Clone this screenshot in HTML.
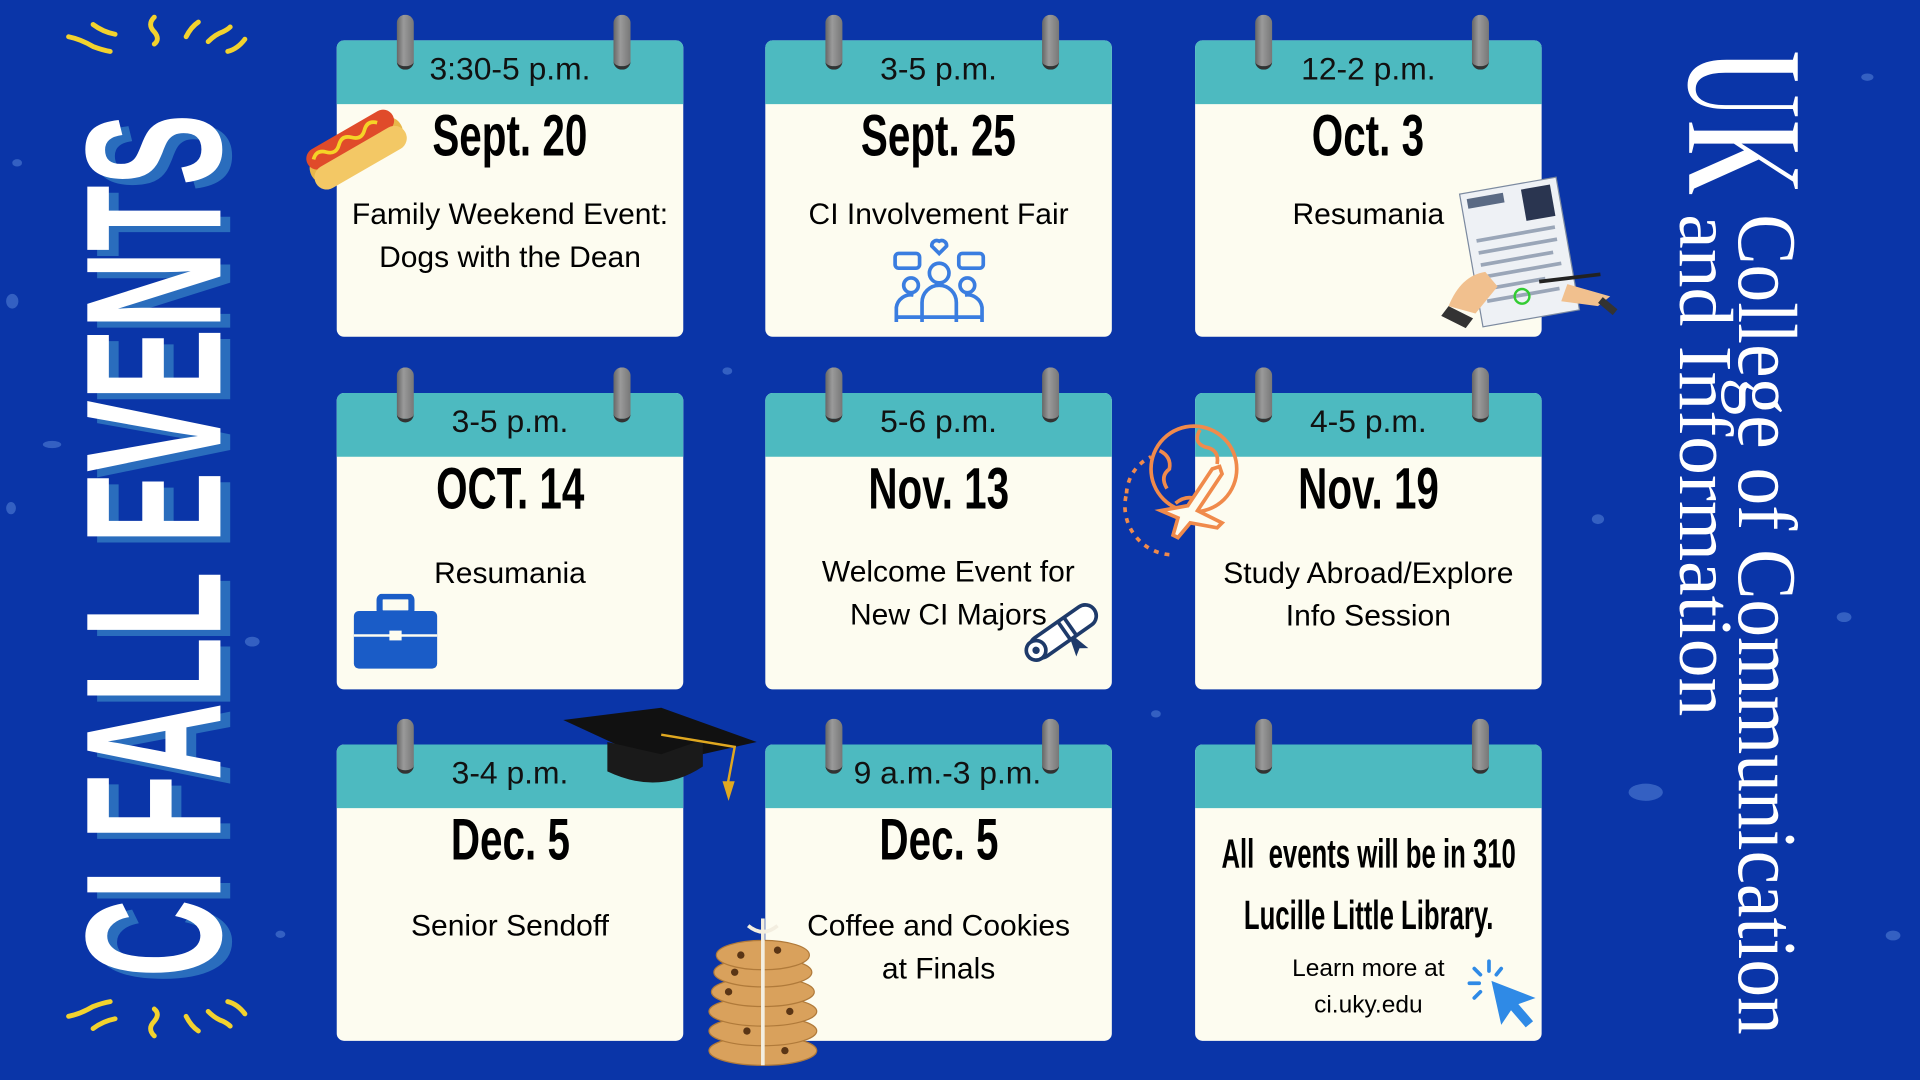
<!DOCTYPE html>
<html><head><meta charset="utf-8"><style>
html,body{margin:0;padding:0;width:1920px;height:1080px;overflow:hidden;background:#0a35a8}
#w{position:absolute;left:0;top:0;width:1568px;height:882px;transform:scale(1.22449);transform-origin:0 0;background:#0a35a8;font-family:"Liberation Sans",sans-serif}
.c{position:absolute;width:283px;height:242px;background:#fdfcf0;border-radius:6px;overflow:visible}
.h{position:absolute;left:0;top:0;width:100%;height:52px;background:#4dbac0;border-radius:6px 6px 0 0;text-align:center;font-size:26px;line-height:46px;color:#111}
.r{position:absolute;top:-21px;width:14px;height:42px;border-radius:7px;background:linear-gradient(90deg,#666,#9a9a9a 40%,#777);border-bottom:3px solid #333}
.r1{left:49px}.r2{left:226px}
.d{position:absolute;left:-200px;width:683px;top:56px;text-align:center;white-space:nowrap;color:#000}
.d span{display:inline-block;font-weight:bold;font-size:44px;line-height:46px;transform:scale(.75,1.08)}
.t{position:absolute;left:0;width:100%;text-align:center;font-size:24.5px;line-height:35px;color:#000;white-space:nowrap}
.dot{position:absolute;background:#3f6cc8;border-radius:50%;opacity:.8}
</style></head><body><div id="w">
<div class="dot" style="left:10px;top:130px;width:8px;height:6px"></div>
<div class="dot" style="left:5px;top:240px;width:10px;height:12px"></div>
<div class="dot" style="left:35px;top:360px;width:15px;height:6px"></div>
<div class="dot" style="left:5px;top:410px;width:8px;height:10px"></div>
<div class="dot" style="left:200px;top:520px;width:12px;height:8px"></div>
<div class="dot" style="left:225px;top:760px;width:8px;height:6px"></div>
<div class="dot" style="left:1330px;top:640px;width:28px;height:14px"></div>
<div class="dot" style="left:1500px;top:500px;width:12px;height:8px"></div>
<div class="dot" style="left:1520px;top:60px;width:10px;height:6px"></div>
<div class="dot" style="left:590px;top:300px;width:8px;height:6px"></div>
<div class="dot" style="left:940px;top:580px;width:8px;height:6px"></div>
<div class="dot" style="left:1300px;top:420px;width:10px;height:8px"></div>
<div class="dot" style="left:1540px;top:760px;width:12px;height:8px"></div>

<svg style="position:absolute;left:40px;top:0" width="200" height="882">
<g font-family="Liberation Sans, sans-serif" font-weight="bold" font-size="158">
<text transform="translate(148,803) rotate(-90)" fill="#2a6dbd" textLength="705" lengthAdjust="spacingAndGlyphs">CI FALL EVENTS</text>
<text transform="translate(140,798) rotate(-90)" fill="#fff" textLength="705" lengthAdjust="spacingAndGlyphs">CI FALL EVENTS</text>
</g>
<g stroke="#f2d22e" stroke-width="4" fill="none" stroke-linecap="round">
<path d="M16 30 q10 2 20 8 q8 3 14 4"/><path d="M36 20 q8 6 18 8"/><path d="M86 14 q-6 6 0 12 q5 6 0 10"/><path d="M112 30 q4 -8 10 -12"/><path d="M130 34 q6 -6 12 -8 q4 -2 6 -4"/><path d="M146 42 q8 -2 14 -10"/>
<path d="M16 830 q10 -2 20 -8 q8 -3 14 -4"/><path d="M36 840 q8 -6 18 -8"/><path d="M86 846 q-6 -6 0 -12 q5 -6 0 -10"/><path d="M112 830 q4 8 10 12"/><path d="M130 826 q6 6 12 8 q4 2 6 4"/><path d="M146 818 q8 2 14 10"/>
</g></svg>

<svg style="position:absolute;left:1360px;top:30px" width="130" height="830">
<text transform="translate(18,10) rotate(90)" font-family="Liberation Serif, serif" font-weight="bold" font-size="140" fill="#fff" stroke="#0a35a8" stroke-width="3" textLength="120" lengthAdjust="spacingAndGlyphs">UK</text>
<g font-family="Liberation Serif, serif" fill="#fff">
<text transform="translate(12,145) rotate(90)" font-size="62" textLength="410" lengthAdjust="spacingAndGlyphs">and Information</text>
<text transform="translate(60,145) rotate(90)" font-size="68" textLength="670" lengthAdjust="spacingAndGlyphs">College of Communication</text>
</g></svg>

<div class="c" style="left:275px;top:33px"><div class="h">3:30-5 p.m.</div><div class="r r1"></div><div class="r r2"></div>
<div class="d"><span>Sept. 20</span></div><div class="t" style="top:125px">Family Weekend Event:<br>Dogs with the Dean</div></div>
<div class="c" style="left:625px;top:33px"><div class="h">3-5 p.m.</div><div class="r r1"></div><div class="r r2"></div>
<div class="d"><span>Sept. 25</span></div><div class="t" style="top:125px">CI Involvement Fair</div>
<svg style="position:absolute;left:102px;top:160px" width="80" height="75" fill="none" stroke="#3a7de0" stroke-width="3"><circle cx="40" cy="30" r="8"/><path d="M26 70 v-16 a14 14 0 0 1 28 0 v16"/><circle cx="17" cy="40" r="6"/><path d="M5 70 v-12 a12 12 0 0 1 14 -10"/><circle cx="63" cy="40" r="6"/><path d="M75 70 v-12 a12 12 0 0 0 -14 -10"/><path d="M4 66 h72"/><rect x="4" y="14" width="20" height="12" rx="3"/><rect x="56" y="14" width="20" height="12" rx="3"/><path d="M40 14 l-6 -6 a4 4 0 0 1 6 -4 a4 4 0 0 1 6 4z"/></svg></div>
<div class="c" style="left:976px;top:33px"><div class="h">12-2 p.m.</div><div class="r r1"></div><div class="r r2"></div>
<div class="d"><span>Oct. 3</span></div><div class="t" style="top:125px">Resumania</div></div>

<svg style="position:absolute;left:244px;top:80px" width="92" height="82"><g transform="rotate(-30 46 41)"><rect x="4" y="30" width="84" height="26" rx="13" fill="#e8b74a"/><rect x="6" y="24" width="80" height="18" rx="9" fill="#e04b2a"/><path d="M12 32 q6 -6 12 0 t12 0 t12 0 t12 0 t12 0" stroke="#f5d327" stroke-width="3" fill="none"/><rect x="4" y="40" width="84" height="20" rx="10" fill="#f3c865"/></g></svg>
<svg style="position:absolute;left:1175px;top:140px" width="150" height="135"><g transform="rotate(-10 70 60)"><rect x="25" y="10" width="80" height="110" fill="#eef1f5" stroke="#7c8aa0"/><rect x="30" y="15" width="30" height="8" fill="#5a6a84"/><rect x="75" y="15" width="24" height="26" fill="#2a3550"/><g stroke="#9aa6b8" stroke-width="3"><path d="M32 50 h65M32 60 h65M32 70 h60M32 80 h65M32 90 h50M32 100 h60"/></g></g><path d="M8 110 q10 -25 30 -28 l10 12 -18 22z" fill="#f1c08e"/><path d="M2 118 l20 10 6 -8 -20 -10z" fill="#333"/><path d="M105 92 l35 10 -10 8 -30 -4z" fill="#f1c08e"/><path d="M82 90 l50 -6" stroke="#222" stroke-width="3"/><path d="M132 105 l12 10" stroke="#333" stroke-width="6"/><circle cx="68" cy="102" r="6" fill="none" stroke="#3c3" stroke-width="2"/></svg>

<div class="c" style="left:275px;top:321px"><div class="h">3-5 p.m.</div><div class="r r1"></div><div class="r r2"></div>
<div class="d"><span>OCT. 14</span></div><div class="t" style="top:130px">Resumania</div>
<svg style="position:absolute;left:13px;top:164px" width="70" height="62"><rect x="22" y="2" width="26" height="14" rx="3" fill="none" stroke="#1a5cc7" stroke-width="5"/><rect x="1" y="14" width="68" height="47" rx="4" fill="#1a5cc7"/><path d="M1 34 h68" stroke="#fdfcf0" stroke-width="2"/><rect x="30" y="30" width="10" height="8" fill="#fdfcf0"/></svg></div>
<div class="c" style="left:625px;top:321px"><div class="h">5-6 p.m.</div><div class="r r1"></div><div class="r r2"></div>
<div class="d"><span>Nov. 13</span></div><div class="t" style="top:129px;left:8px">Welcome Event for<br>New CI Majors</div>
<svg style="position:absolute;left:205px;top:162px" width="75" height="68"><g transform="rotate(-35 38 34)"><rect x="8" y="24" width="62" height="18" rx="9" fill="#fff" stroke="#1e3a6a" stroke-width="3"/><circle cx="12" cy="33" r="8" fill="#fff" stroke="#1e3a6a" stroke-width="3"/><circle cx="12" cy="33" r="3" fill="#1e3a6a"/><path d="M40 24 v18 M46 24 v18" stroke="#1e3a6a" stroke-width="3"/><path d="M40 42 l-4 14 6 -4 6 4 -4 -14" fill="#1e3a6a"/></g></svg></div>
<div class="c" style="left:976px;top:321px"><div class="h">4-5 p.m.</div><div class="r r1"></div><div class="r r2"></div>
<div class="d"><span>Nov. 19</span></div><div class="t" style="top:130px">Study Abroad/Explore<br>Info Session</div></div>
<svg style="position:absolute;left:915px;top:343px" width="125" height="125" fill="none" stroke="#f08a4b" stroke-width="3"><circle cx="60" cy="40" r="35"/><path d="M32 25 q10 5 8 15 q-8 6 -2 16 M65 8 q-6 10 4 14 q12 2 10 14 M45 68 q10 -8 20 -2"/><path d="M55 70 l20 -30 6 -2 2 6 -20 30 20 10 -4 4 -22 -4 -10 12 -4 -2 4 -14 -14 -6z" fill="#fdfcf0"/><path d="M40 110 a40 40 0 0 1 -35 -50" stroke-dasharray="4 5"/><path d="M5 60 a35 35 0 0 1 20 -30" stroke-dasharray="4 5"/></svg>

<div class="c" style="left:275px;top:608px"><div class="h">3-4 p.m.</div><div class="r r1"></div><div class="r r2"></div>
<div class="d"><span>Dec. 5</span></div><div class="t" style="top:131px">Senior Sendoff</div></div>
<div class="c" style="left:625px;top:608px"><div class="h">&nbsp; 9 a.m.-3 p.m.</div><div class="r r1"></div><div class="r r2"></div>
<div class="d"><span>Dec. 5</span></div><div class="t" style="top:131px">Coffee and Cookies<br>at Finals</div></div>
<div class="c" style="left:976px;top:608px"><div class="h"></div><div class="r r1"></div><div class="r r2"></div>
<div class="d" style="top:70px"><span style="font-size:30px;line-height:45px;transform:scale(.7,1.12)">All&nbsp; events will be in 310<br>Lucille Little Library.</span></div>
<div class="t" style="top:168px;font-size:20px;line-height:30px">Learn more at<br>ci.uky.edu</div>
<svg style="position:absolute;left:222px;top:175px" width="62" height="60"><g stroke="#2f8ae6" stroke-width="3" stroke-linecap="round"><path d="M18 2 v8M6 8 l5 5M2 20 h8M6 32 l5 -5M28 8 l-4 5"/></g><path d="M20 18 l36 14 -14 5 12 14 -6 5 -12 -14 -8 12z" fill="#2f8ae6"/></svg></div>

<svg style="position:absolute;left:458px;top:576px" width="165" height="82"><path d="M2 12 l80 -10 78 28 -80 18z" fill="#111"/><path d="M38 30 v24 q42 20 78 -4 v-22 l-34 12z" fill="#1a1a1a"/><path d="M82 24 l60 10 -6 32" stroke="#e0a820" stroke-width="2" fill="none"/><path d="M132 62 l5 16 5 -16z" fill="#e0a820"/></svg>
<svg style="position:absolute;left:575px;top:750px" width="100" height="125"><g fill="#d9a15c" stroke="#b07a3a" stroke-width="1">
<ellipse cx="48" cy="108" rx="44" ry="12"/><ellipse cx="48" cy="92" rx="44" ry="12"/><ellipse cx="48" cy="76" rx="44" ry="12"/><ellipse cx="48" cy="60" rx="42" ry="12"/><ellipse cx="48" cy="44" rx="40" ry="12"/><ellipse cx="48" cy="30" rx="38" ry="12"/></g>
<g fill="#5a3515"><circle cx="30" cy="30" r="3"/><circle cx="60" cy="26" r="3"/><circle cx="20" cy="60" r="3"/><circle cx="70" cy="76" r="3"/><circle cx="35" cy="92" r="3"/><circle cx="66" cy="108" r="3"/><circle cx="25" cy="44" r="3"/></g>
<path d="M48 0 v120 M36 6 q12 10 24 0" stroke="#f3eee0" stroke-width="3" fill="none"/></svg>
</div></body></html>
